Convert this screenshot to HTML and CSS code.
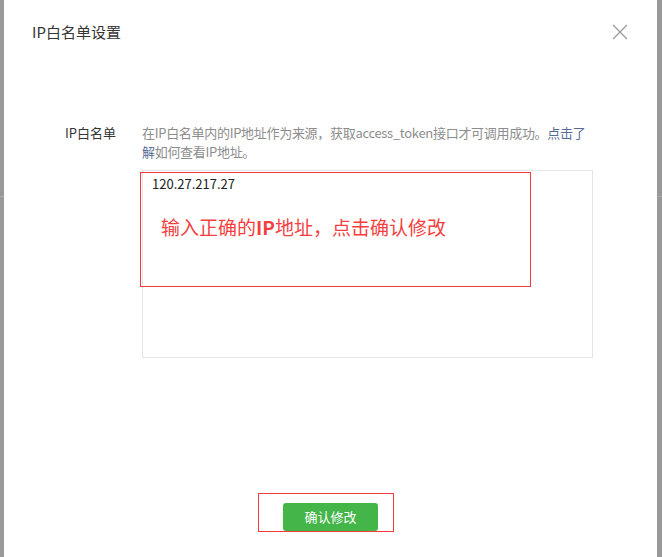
FILE: index.html
```html
<!DOCTYPE html>
<html lang="zh-CN">
<head>
<meta charset="utf-8">
<title>IP白名单设置</title>
<link rel="stylesheet" href="styles.css">
</head>
<body>
<div class="page">
  <div class="backdrop backdrop-left"><span class="backdrop-line"></span></div>
  <div class="dialog">
    <div class="dialog-head">
      <h3 class="dialog-title">IP白名单设置</h3>
      <button class="dialog-close" aria-label="关闭">
        <svg width="16" height="16" viewBox="0 0 16 16"><path d="M1 1 L15 15 M15 1 L1 15" stroke="#9b9b9b" stroke-width="1.3" fill="none"/></svg>
      </button>
    </div>
    <div class="form">
      <div class="form-row">
        <label class="form-label">IP白名单</label>
        <div class="form-content">
          <p class="form-desc">在IP白名单内的IP地址作为来源，获取access_token接口才可调用成功。<a class="link">点击了解</a>如何查看IP地址。</p>
          <div class="field">
            <textarea class="field-input">120.27.217.27</textarea>
            <div class="annot annot-field">输入正确的<b>IP</b>地址，点击确认修改</div>
          </div>
        </div>
      </div>
    </div>
    <div class="dialog-foot">
      <div class="btn-wrap">
        <button class="btn-primary">确认修改</button>
        <span class="annot annot-btn"></span>
      </div>
    </div>
  </div>
  <div class="backdrop backdrop-right"><span class="backdrop-line"></span></div>
</div>
</body>
</html>
```
FILE: styles.css
```css
* { box-sizing: border-box; }
html, body { margin: 0; padding: 0; }
body {
  font-family: "Noto Sans CJK SC", "Noto Sans", sans-serif;
  background: #999;
  color: #353535;
}
.page {
  display: flex;
  height: 557px;
  width: 662px;
}
.backdrop {
  background: #999;
  display: flex;
  flex-direction: column;
  padding-top: 196px;
}
.backdrop-left { width: 4px; }
.backdrop-right { width: 5px; }
.backdrop-line {
  display: block;
  height: 1px;
  background: #aaa;
}
.dialog {
  flex: 1;
  background: #fff;
  display: flex;
  flex-direction: column;
}
.dialog-head {
  display: flex;
  justify-content: space-between;
  align-items: center;
  padding: 20px 29px 0 28px;
}
.dialog-title {
  margin: 0;
  font-size: 15px;
  font-weight: normal;
  line-height: 24px;
  color: #353535;
}
.dialog-close {
  border: 0;
  background: none;
  padding: 0;
  width: 16px;
  height: 16px;
  display: block;
}
.dialog-close svg { display: block; }
.form { margin-top: 79px; }
.form-row {
  display: grid;
  grid-template-columns: 112px 451px;
  column-gap: 26px;
  align-items: start;
}
.form-label {
  text-align: right;
  font-size: 13px;
  line-height: 19px;
  color: #353535;
}
.form-desc {
  margin: 0;
  font-size: 13px;
  line-height: 19px;
  letter-spacing: -0.3px;
  color: #8d8d8d;
}
.link { color: #576b95; text-decoration: none; }
.field {
  position: relative;
  margin-top: 9px;
  height: 188px;
}
.field-input {
  display: block;
  width: 100%;
  height: 100%;
  border: 1px solid #e4e4e8;
  padding: 4px 9px;
  margin: 0;
  font-family: "Noto Sans CJK SC", "Noto Sans", sans-serif;
  font-size: 13px;
  line-height: 18px;
  color: #222;
  resize: none;
  outline: none;
  background: #fff;
}
.annot {
  position: absolute;
  border: 1px solid #f33a3a;
  pointer-events: none;
}
.annot-field {
  left: -2px;
  top: 2px;
  width: 391px;
  height: 115px;
  padding: 41px 0 0 20px;
  font-size: 19px;
  line-height: 26px;
  color: #f43f3f;
}
.annot-field b { font-weight: bold; }
.dialog-foot {
  margin-top: auto;
  display: flex;
  justify-content: center;
  padding-bottom: 26px;
}
.btn-wrap { position: relative; }
.btn-primary {
  display: block;
  width: 95px;
  height: 28px;
  border: 0;
  border-radius: 3px;
  background: #44b549;
  color: #fff;
  font-family: "Noto Sans CJK SC", "Noto Sans", sans-serif;
  font-size: 13px;
  line-height: 28px;
  padding: 0;
}
.annot-btn {
  left: -25px;
  right: -16px;
  top: -10px;
  bottom: -1px;
}
```
